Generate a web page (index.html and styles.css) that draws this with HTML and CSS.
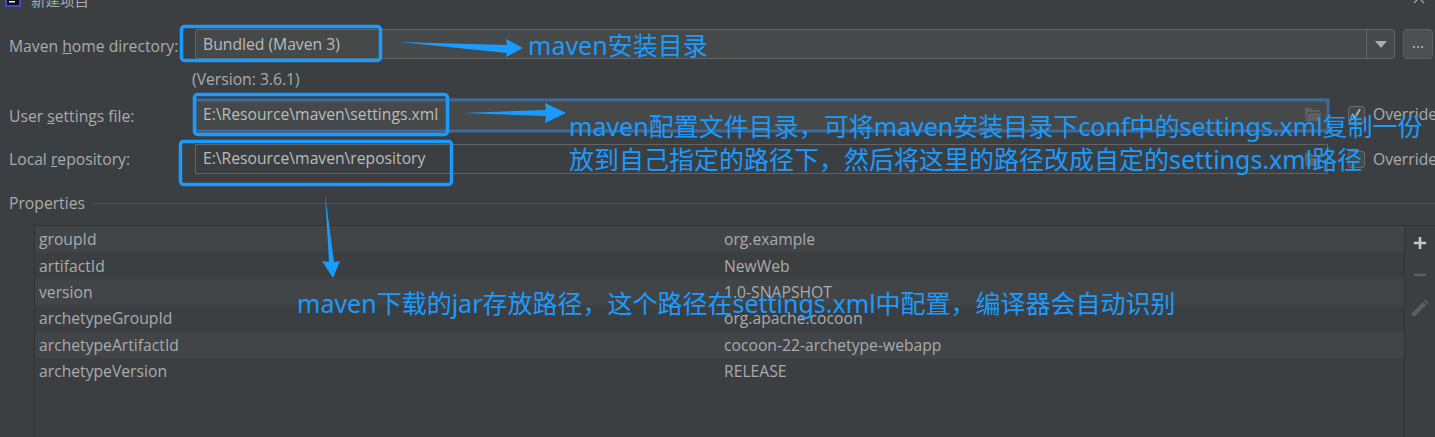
FILE: index.html
```html
<!DOCTYPE html>
<html lang="zh-CN">
<head>
    <meta charset="UTF-8">
    <meta name="viewport" content="width=device-width, initial-scale=1.0">
    <title>新建项目</title>
    <link rel="stylesheet" href="styles.css">
</head>
<body>
    <div class="dialog">
        <header class="titlebar">
            <svg class="app-icon" width="16" height="16" viewBox="0 0 16 16">
                <rect x="0" y="0" width="16" height="16" fill="#3b4bd0"/>
                <rect x="2" y="2" width="12" height="12" fill="#111"/>
                <rect x="4" y="10" width="6" height="1.5" fill="#eee"/>
            </svg>
            <span class="title-text">新建项目</span>
            <svg class="close-icon" width="12" height="12" viewBox="0 0 12 12">
                <path d="M1 1 L11 11 M11 1 L1 11" stroke="#a9abad" stroke-width="1.2" fill="none"/>
            </svg>
        </header>

        <section class="form">
            <div class="row row-home">
                <label class="row-label">Maven <u>h</u>ome directory:</label>
                <div class="field combo">
                    <span class="field-text">Bundled (Maven 3)</span>
                    <span class="combo-arrow"><i class="triangle"></i></span>
                </div>
                <button class="more-btn" type="button">...</button>
            </div>
            <div class="version">(Version: 3.6.1)</div>
            <div class="row row-settings">
                <label class="row-label">User <u>s</u>ettings file:</label>
                <div class="field field-focus">
                    <span class="field-text">E:\Resource\maven\settings.xml</span>
                    <svg class="folder" width="18" height="16" viewBox="0 0 18 16">
                        <path d="M1 2 H7 L9 4 H16 V6 H4 L1 14 Z M4.500 7 H17.500 L14.500 15 H1.500 Z" fill="#5d6163"/>
                    </svg>
                </div>
                <label class="override">
                    <span class="checkbox">
                        <svg width="14" height="14" viewBox="0 0 14 14"><path d="M3 7 L6 11 L11 2" stroke="#a9abad" stroke-width="2" fill="none"/></svg>
                    </span>
                    Override
                </label>
            </div>
            <div class="row row-repo">
                <label class="row-label">Local <u>r</u>epository:</label>
                <div class="field">
                    <span class="field-text">E:\Resource\maven\repository</span>
                    <svg class="folder" width="18" height="16" viewBox="0 0 18 16">
                        <path d="M1 2 H7 L9 4 H16 V6 H4 L1 14 Z M4.500 7 H17.500 L14.500 15 H1.500 Z" fill="#5d6163"/>
                    </svg>
                </div>
                <label class="override">
                    <span class="checkbox"></span>
                    Override
                </label>
            </div>
        </section>

        <div class="group-title">
            <span>Properties</span>
            <span class="group-line"></span>
        </div>

        <section class="props">
            <div class="props-table">
                <div class="prop prop-odd"><span class="prop-key">groupId</span><span>org.example</span></div>
                <div class="prop"><span class="prop-key">artifactId</span><span>NewWeb</span></div>
                <div class="prop prop-odd"><span class="prop-key">version</span><span>1.0-SNAPSHOT</span></div>
                <div class="prop"><span class="prop-key">archetypeGroupId</span><span>org.apache.cocoon</span></div>
                <div class="prop prop-odd"><span class="prop-key">archetypeArtifactId</span><span>cocoon-22-archetype-webapp</span></div>
                <div class="prop"><span class="prop-key">archetypeVersion</span><span>RELEASE</span></div>
            </div>
            <div class="props-tools">
                <svg width="16" height="16" viewBox="0 0 16 16"><path d="M8 2 V14 M2 8 H14" stroke="#c4c6c8" stroke-width="2.600"/></svg>
                <svg width="16" height="16" viewBox="0 0 16 16"><path d="M2 8 H14" stroke="#5b5f61" stroke-width="2.400"/></svg>
                <svg width="18" height="18" viewBox="0 0 18 18"><path d="M1 14 L12 3 L15 6 L4 17 L1 17 Z M13 2 L14.500 0.500 L17.500 3.500 L16 5 Z" fill="#5b5f61"/></svg>
            </div>
        </section>
    </div>

    <!-- blue notes drawn on top of the screenshot -->
    <svg class="marks" width="1435" height="437" viewBox="0 0 1435 437">
        <rect class="focus-box" x="195" y="100" width="1133" height="31"/>
        <g class="mark-box">
            <rect x="181.500" y="26.500" width="199" height="34" rx="3"/>
            <rect x="194.500" y="94.500" width="253" height="40" rx="3"/>
            <rect x="180.500" y="141.500" width="271" height="43" rx="3"/>
        </g>
        <g class="mark-arrow">
            <polygon points="399,42 507,45 506,39 523,48 506,57 507,53"/>
            <polygon points="463,113 546,110 545,103 566,113 545,123 546,116"/>
            <polygon points="325,194 329,262 322,261 333,278 340,261 334,262"/>
        </g>
    </svg>
    <div class="note note-home">maven安装目录</div>
    <div class="note note-settings">maven配置文件目录，可将maven安装目录下conf中的settings.xml复制一份<br>放到自己指定的路径下，然后将这里的路径改成自定的settings.xml路径</div>
    <div class="note note-repo">maven下载的jar存放路径，这个路径在settings.xml中配置，编译器会自动识别</div>
</body>
</html>
```

FILE: styles.css
```css
html, body {
    margin: 0;
    padding: 0;
}

body {
    width: 1435px;
    height: 437px;
    overflow: hidden;
    position: relative;
    background-color: #3c3f41;
    color: #a9abad;
    font-family: "Open Sans", "Noto Sans", "Noto Sans CJK SC", sans-serif;
    font-size: 15.7px;
}

.dialog {
    display: flex;
    flex-direction: column;
    height: 437px;
}

.titlebar {
    display: flex;
    align-items: center;
    height: 16px;
    margin-top: -9px;
    padding: 0 8px 0 5px;
    flex: none;
}

.app-icon {
    margin-right: 10px;
}

.title-text {
    font-size: 14.500px;
}

.close-icon {
    margin-left: auto;
    margin-right: 2px;
    margin-top: -2px;
}

.form {
    padding: 22px 2px 0 9px;
}

.row {
    display: flex;
    align-items: center;
}

.row-label {
    width: 186px;
    flex: none;
    padding-top: 3px;
    white-space: nowrap;
}

.row-home {
    height: 30px;
}

.row-settings {
    height: 32px;
    margin-top: 9px;
}

.row-repo {
    height: 30px;
    margin-top: 14px;
}

.row-repo .row-label {
    padding-top: 0;
}

.field {
    display: flex;
    align-items: center;
    flex: none;
    box-sizing: border-box;
    width: 1133px;
    height: 100%;
    border: 1px solid #646464;
    background-color: #45494a;
    padding-left: 7px;
    color: #bbbbbb;
}

.row-repo .field {
    background-color: #3c3f41;
}

.row-repo .field-text {
    padding-bottom: 2px;
}

.field-focus {
    border-color: transparent;
}

.field-text {
    white-space: nowrap;
}

.folder {
    margin-left: auto;
    margin-right: 5px;
}

.combo {
    width: 1200px;
    border-radius: 3px;
    padding-right: 0;
}

.combo-arrow {
    display: flex;
    align-items: center;
    justify-content: center;
    margin-left: auto;
    width: 27px;
    height: 100%;
    border-left: 1px solid #646464;
}

.triangle {
    width: 0;
    height: 0;
    border-left: 6px solid transparent;
    border-right: 6px solid transparent;
    border-top: 7px solid #a9abad;
}

.more-btn {
    flex: none;
    width: 30px;
    height: 30px;
    margin-left: 8px;
    padding: 0 0 4px;
    border: 1px solid #5e6060;
    border-radius: 4px;
    background-color: #4c5052;
    color: #bbbbbb;
    font: inherit;
}

.version {
    height: 20px;
    line-height: 20px;
    margin: 10px 0 0 183px;
}

.override {
    display: flex;
    align-items: center;
    flex: none;
    margin-left: 20px;
    white-space: nowrap;
}

.checkbox {
    box-sizing: border-box;
    flex: none;
    width: 17px;
    height: 17px;
    margin-right: 8px;
    border: 1px solid #6b6b6b;
    border-radius: 3px;
    background-color: #43494a;
    display: flex;
}

.group-title {
    display: flex;
    align-items: center;
    gap: 7px;
    height: 20px;
    margin-top: 19px;
    padding-left: 9px;
}

.group-line {
    flex: 1;
    height: 1px;
    background-color: #515151;
}

.props {
    display: flex;
    flex: 1;
    margin: 12px 0 0 34px;
    border-top: 1px solid #323232;
}

.props-table {
    flex: 1;
    border-left: 1px solid #323232;
    border-right: 1px solid #323232;
}

.prop {
    display: flex;
    align-items: center;
    height: 26.400px;
    padding-left: 4px;
    white-space: nowrap;
}

.prop-odd {
    background-color: #414548;
}

.prop-key {
    width: 685px;
    flex: none;
}

.props-tools {
    display: flex;
    flex-direction: column;
    align-items: center;
    width: 30px;
    padding-top: 9px;
    gap: 16px;
    flex: none;
}

/* annotations lying over the dialog */
.marks {
    position: absolute;
    left: 0;
    top: 0;
}

.mark-box rect {
    fill: none;
    stroke: #1a9bff;
    stroke-width: 3.500;
}

.focus-box {
    fill: none;
    stroke: #3d6a9c;
    stroke-width: 3;
}

.mark-arrow polygon {
    fill: #1a9bff;
}

.note {
    position: absolute;
    color: #1a9bff;
    font-family: "Noto Sans", "Noto Sans CJK SC", sans-serif;
    font-size: 25px;
    line-height: 33px;
    white-space: nowrap;
}

.note-home {
    left: 528px;
    top: 29px;
}

.note-settings {
    left: 569px;
    top: 110px;
}

.note-repo {
    left: 297px;
    top: 287px;
}
```
